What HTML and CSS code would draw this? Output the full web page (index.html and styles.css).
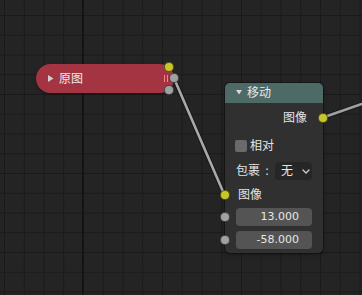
FILE: index.html
```html
<!DOCTYPE html>
<html lang="zh">
<head>
<meta charset="utf-8">
<title>Node editor</title>
<link rel="stylesheet" href="styles.css">
</head>
<body>
<div class="canvas">
  <svg class="backdrop" width="362" height="295" viewBox="0 0 362 295">
    <defs>
      <pattern id="grid" x="4" y="15" width="19.75" height="19.75" patternUnits="userSpaceOnUse">
        <rect x="0" y="0" width="19.75" height="1" fill="#1a1a1a"/>
        <rect x="0" y="0" width="1" height="19.75" fill="#1a1a1a"/>
      </pattern>
    </defs>
    <rect width="362" height="295" fill="#242424"/>
    <rect width="362" height="295" fill="url(#grid)"/>
    <rect x="82.2" y="0" width="1.2" height="295" fill="#101010"/>
    <g stroke-linecap="round">
      <line x1="174" y1="78.3" x2="224.5" y2="195" stroke="#161616" stroke-width="4.6" stroke-opacity="0.8"/>
      <line x1="174" y1="78.3" x2="224.5" y2="195" stroke="#a9a9a9" stroke-width="2.6"/>
      <line x1="323" y1="117.5" x2="372" y2="100.5" stroke="#161616" stroke-width="4.6" stroke-opacity="0.8"/>
      <line x1="323" y1="117.5" x2="372" y2="100.5" stroke="#a0a0a0" stroke-width="2.6"/>
    </g>
  </svg>

  <div class="node-collapsed">
    <svg class="tri" width="6" height="7" viewBox="0 0 6 7"><polygon points="0,0 5.5,3.5 0,7" fill="#cfcfcf"/></svg>
    <span class="collapsed-label">原图</span>
    <span class="hidden-mark"></span>
    <span class="sock yellow s-a"></span>
    <span class="sock grey s-b"></span>
    <span class="sock grey s-c"></span>
  </div>

  <div class="node">
    <div class="node-header">
      <svg class="tri" width="6" height="5" viewBox="0 0 6 5"><polygon points="0,0 6,0 3,4.5" fill="#d8d8d8"/></svg>
      <span class="header-label">移动</span>
    </div>
    <div class="node-body">
      <div class="row row-out">
        <span>图像</span>
        <span class="sock yellow sock-right"></span>
      </div>
      <div class="row row-check">
        <span class="checkbox"></span>
        <span class="check-label">相对</span>
      </div>
      <div class="row row-wrap">
        <span>包裹<span class="colon">:</span></span>
        <span class="dropdown">
          <span>无</span>
          <svg class="chev" width="8" height="5" viewBox="0 0 8 5"><polyline points="1,1 4,4 7,1" fill="none" stroke="#d0d0d0" stroke-width="1.3" stroke-linecap="round" stroke-linejoin="round"/></svg>
        </span>
      </div>
      <div class="row row-in">
        <span class="sock yellow sock-left"></span>
        <span>图像</span>
      </div>
      <div class="field field-1">
        <span class="sock grey sock-left"></span>
        <span class="num">13.000</span>
      </div>
      <div class="field field-2">
        <span class="sock grey sock-left"></span>
        <span class="num">-58.000</span>
      </div>
    </div>
  </div>
</div>
</body>
</html>
```
FILE: styles.css
```css
html, body {
  margin: 0;
  padding: 0;
  background: #242424;
}

.canvas {
  position: relative;
  width: 362px;
  height: 295px;
  overflow: hidden;
  font-family: "DejaVu Sans", "Noto Sans CJK SC", sans-serif;
  font-size: 12px;
  line-height: 14px;
  color: #e4e4e4;
}

.backdrop {
  position: absolute;
  left: 0;
  top: 0;
  display: block;
}

/* collapsed image node */
.node-collapsed {
  position: absolute;
  left: 36px;
  top: 64px;
  width: 138px;
  height: 29px;
  box-sizing: border-box;
  border-radius: 14.5px;
  background: #a53442;
  display: flex;
  align-items: center;
  padding-left: 12px;
  box-shadow: 0 1px 3px rgba(0, 0, 0, 0.35);
}

.tri {
  display: block;
  flex: none;
}

.collapsed-label {
  margin-left: 5px;
  color: #ececec;
}

.hidden-mark {
  position: absolute;
  left: 128px;
  top: 11px;
  width: 4px;
  height: 7px;
  border-left: 1px solid #ff7d95;
  border-right: 1px solid #ff7d95;
  box-sizing: border-box;
}

.sock {
  position: absolute;
  width: 10px;
  height: 10px;
  box-sizing: border-box;
  border-radius: 50%;
  border: 1px solid rgba(0, 0, 0, 0.55);
}

.yellow { background: #c7c729; }
.grey { background: #a1a1a1; }

.s-a { left: 128.3px; top: -1.7px; }
.s-b { left: 133px; top: 9.3px; }
.s-c { left: 128.3px; top: 21px; }

/* translate node */
.node {
  position: absolute;
  left: 225px;
  top: 82.5px;
  width: 98px;
  height: 170.5px;
  background: #303030;
  border-radius: 5px;
  box-shadow: 0 0 0 1px rgba(0, 0, 0, 0.35), 0 2px 4px rgba(0, 0, 0, 0.3);
}

.node-header {
  height: 20px;
  background: #4e6a67;
  border-radius: 5px 5px 0 0;
  display: flex;
  align-items: center;
  padding-left: 11px;
}

.header-label {
  margin-left: 5px;
  color: #e8e8e8;
}

.node-body {
  display: flex;
  flex-direction: column;
  padding-top: 5px;
}

.row {
  position: relative;
  height: 20px;
  display: flex;
  align-items: center;
}

.row-out {
  justify-content: flex-end;
  padding-right: 16px;
}

.sock-right { right: -5px; top: 5px; }
.sock-left { left: -5px; top: 4px; }
.row .sock-left { top: 5px; }

.row-check {
  margin-top: 8.5px;
  padding-left: 10px;
}

.checkbox {
  width: 12px;
  height: 12px;
  border-radius: 2px;
  background: #6a6a6a;
  flex: none;
}

.check-label {
  margin-left: 3px;
}

.row-wrap {
  margin-top: 5px;
  padding-left: 11px;
  padding-right: 11px;
  justify-content: space-between;
}

.colon {
  margin-left: 5px;
}

.dropdown {
  width: 37px;
  height: 18px;
  box-sizing: border-box;
  border-radius: 4px;
  background: #262626;
  display: flex;
  align-items: center;
  padding-left: 6px;
  padding-right: 2px;
  justify-content: space-between;
}

.chev {
  display: block;
}

.row-in {
  margin-top: 4px;
  padding-left: 13px;
}

.field {
  position: relative;
  height: 18px;
  margin: 0 11px;
  border-radius: 4px;
  background: #545454;
  display: flex;
  align-items: center;
  justify-content: flex-end;
  padding-right: 13px;
}

.field .sock-left { left: -16px; }

.field-1 { margin-top: 3px; }
.field-2 { margin-top: 4.5px; }

.num {
  font-size: 11px;
  color: #e6e6e6;
}
```
